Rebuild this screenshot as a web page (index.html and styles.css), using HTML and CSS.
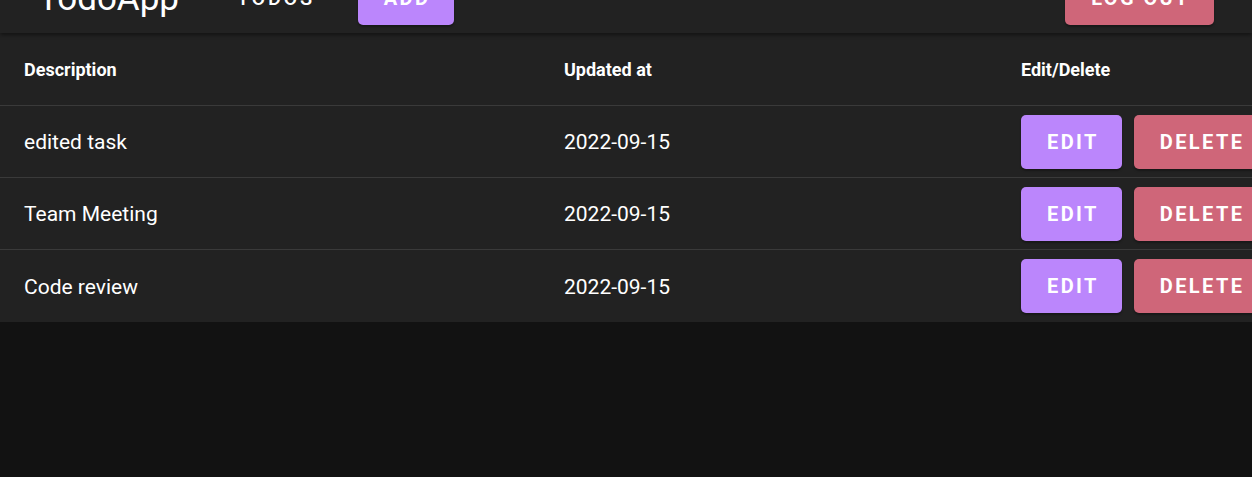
FILE: index.html
```html
<!DOCTYPE html>
<html lang="en">
<head>
<meta charset="utf-8">
<title>TodoApp</title>
<link rel="stylesheet" href="styles.css">
</head>
<body>
<header class="appbar">
  <div class="brand">TodoApp</div>
  <a class="nav-link">TODOS</a>
  <button class="btn btn-primary nav-add">ADD</button>
  <div class="spacer"></div>
  <button class="btn btn-danger">LOG OUT</button>
  <div class="edge-outline"></div>
</header>
<main class="table">
  <div class="row head">
    <div class="cell">Description</div>
    <div class="cell">Updated at</div>
    <div class="cell">Edit/Delete</div>
  </div>
  <div class="row">
    <div class="cell">edited task</div>
    <div class="cell">2022-09-15</div>
    <div class="cell actions"><button class="btn btn-primary">EDIT</button><button class="btn btn-danger">DELETE</button></div>
  </div>
  <div class="row">
    <div class="cell">Team Meeting</div>
    <div class="cell">2022-09-15</div>
    <div class="cell actions"><button class="btn btn-primary">EDIT</button><button class="btn btn-danger">DELETE</button></div>
  </div>
  <div class="row">
    <div class="cell">Code review</div>
    <div class="cell">2022-09-15</div>
    <div class="cell actions"><button class="btn btn-primary">EDIT</button><button class="btn btn-danger">DELETE</button></div>
  </div>
</main>
</body>
</html>
```
FILE: styles.css
```css
html, body {
  margin: 0;
  padding: 0;
  overflow: hidden;
}
body {
  background: #121212;
  color: #ffffff;
  font-family: Roboto, "Liberation Sans", Arial, sans-serif;
  height: 477px;
}
.appbar {
  position: relative;
  z-index: 2;
  height: 70px;
  margin-top: -37px;
  padding: 0 38px;
  display: flex;
  align-items: center;
  background: #222222;
  box-shadow: 0 2px 4px rgba(0, 0, 0, 0.45);
}
.brand {
  font-size: 35px;
  line-height: 1.2;
  font-weight: 400;
  padding-top: 2px;
}
.nav-link {
  margin-left: 58px;
  font-size: 20px;
  font-weight: 500;
  letter-spacing: 2.6px;
  color: #ffffff;
}
.nav-add {
  margin-left: 43px;
}
.spacer {
  flex: 1;
}
.edge-outline {
  position: absolute;
  left: 1249px;
  top: -10px;
  width: 40px;
  height: 32px;
  border: 1px solid #e0e0e0;
  border-radius: 4px;
}
.btn {
  height: 54px;
  padding: 0 24px 0 26px;
  border: none;
  border-radius: 5px;
  font-family: Roboto, "Liberation Sans", Arial, sans-serif;
  font-size: 20px;
  font-weight: 700;
  letter-spacing: 2.4px;
  color: #ffffff;
  box-shadow: 0 2px 2px rgba(0, 0, 0, 0.3);
  cursor: pointer;
}
.btn-primary {
  background: #bb86fc;
}
.btn-danger {
  background: #cf6679;
}
.table {
  position: relative;
  z-index: 1;
  width: 1293px;
  background: #222222;
}
.row {
  display: grid;
  grid-template-columns: 540px 457px 296px;
  height: 72px;
  box-sizing: border-box;
  border-bottom: 1px solid #3a3a3a;
  align-items: center;
}
.row:last-child {
  border-bottom: none;
}
.cell {
  padding: 2px 24px 0;
  font-size: 21px;
  line-height: 1.43;
}
.head {
  height: 73px;
  padding-top: 2px;
}
.head .cell {
  padding-top: 0;
  font-size: 18px;
  font-weight: 700;
}
.actions {
  display: flex;
  gap: 12px;
  padding-top: 0;
  padding-right: 0;
}
.actions .btn {
  padding: 0 23px 0 26px;
}
```
